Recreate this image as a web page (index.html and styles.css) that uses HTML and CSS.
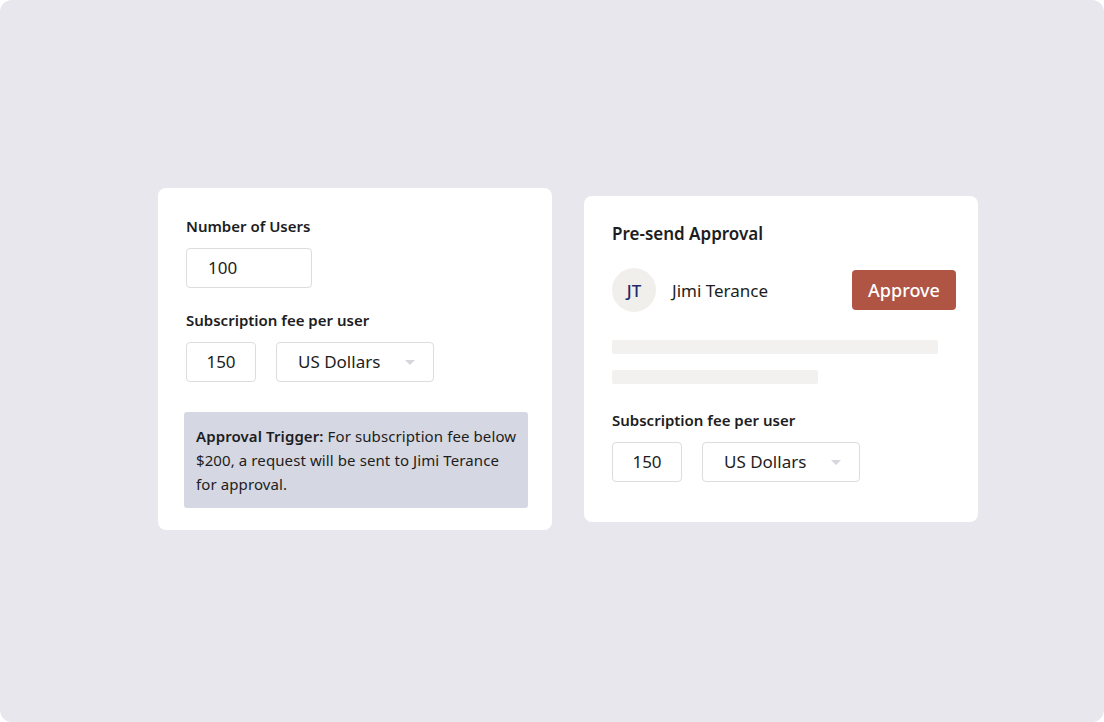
FILE: index.html
```html
<!DOCTYPE html>
<html lang="en">
<head>
    <meta charset="utf-8">
    <title>Pre-send Approval</title>
    <link rel="stylesheet" href="styles.css">
</head>

<body>

    <div class="stage">
        <div class="card card-left">
            <div class="form-item">
                <label class="label">Number of Users</label>
                <div class="field field-users">100</div>
            </div>

            <div class="form-item">
                <label class="label">Subscription fee per user</label>
                <div class="field-row">
                    <div class="field field-fee">150</div>
                    <div class="field field-select">
                        <span>US Dollars</span>
                        <span class="caret"></span>
                    </div>
                </div>
            </div>

            <div class="note">
                <b>Approval Trigger:</b> For subscription fee below $200, a request will be sent to Jimi Terance<br>for approval.
            </div>
        </div>

        <div class="card card-right">
            <h2 class="title">Pre-send Approval</h2>

            <div class="approver">
                <div class="avatar">JT</div>
                <span class="name">Jimi Terance</span>
                <button class="button">Approve</button>
            </div>

            <div class="skeleton skeleton-long"></div>
            <div class="skeleton skeleton-short"></div>

            <div class="form-item">
                <label class="label">Subscription fee per user</label>
                <div class="field-row">
                    <div class="field field-fee">150</div>
                    <div class="field field-select">
                        <span>US Dollars</span>
                        <span class="caret"></span>
                    </div>
                </div>
            </div>
        </div>
    </div>

</body>
</html>
```

FILE: styles.css
```css
body {
    font-family: 'Noto Sans', 'Open Sans', sans-serif;
    background-color: #fff;
    color: #1d1d21;
    margin: 0;
}

.stage {
    width: 1104px;
    height: 722px;
    background-color: #e8e7ee;
    border-radius: 12px;
    box-sizing: border-box;
    display: flex;
    align-items: flex-start;
    gap: 32px;
    padding: 188px 0 0 158px;
}

.card {
    width: 394px;
    background-color: #fff;
    border-radius: 8px;
    box-sizing: border-box;
}

.card-left {
    padding: 28px 24px 22px 28px;
}

.card-right {
    margin-top: 8px;
    padding: 27px 22px 40px 28px;
}

.form-item {
    margin-bottom: 22px;
}

.label {
    display: block;
    font-size: 15px;
    font-weight: 600;
    line-height: 20px;
    margin-bottom: 12px;
}

.field {
    height: 40px;
    border: 1px solid #dcdce1;
    border-radius: 4px;
    box-sizing: border-box;
    font-size: 17px;
    line-height: 38px;
    display: flex;
    align-items: center;
}

.field-users {
    width: 126px;
    padding-left: 21px;
}

.field-row {
    display: flex;
    gap: 20px;
}

.field-fee {
    width: 70px;
    justify-content: center;
}

.field-select {
    width: 158px;
    padding: 0 18px 0 21px;
    justify-content: space-between;
}

.caret {
    width: 0;
    height: 0;
    border-left: 5px solid transparent;
    border-right: 5px solid transparent;
    border-top: 5px solid #d6d6dc;
}

.note {
    margin: 30px 0 0 -2px;
    background-color: #d5d7e3;
    border-radius: 3px;
    padding: 12px 6px 12px 12px;
    font-size: 15px;
    line-height: 24px;
    letter-spacing: 0.1px;
}

.note b {
    font-weight: 600;
}

.title {
    margin: 0 0 23px;
    font-size: 17px;
    font-weight: 600;
    line-height: 22px;
}

.approver {
    display: flex;
    align-items: center;
    margin-bottom: 28px;
}

.avatar {
    width: 44px;
    height: 44px;
    border-radius: 50%;
    background-color: #f0efec;
    color: #1f2a6b;
    font-size: 17px;
    font-weight: 500;
    display: flex;
    align-items: center;
    justify-content: center;
}

.name {
    margin-left: 16px;
    font-size: 17px;
    flex: 1;
}

.button {
    background-color: #b05444;
    color: white;
    width: 104px;
    height: 40px;
    border: none;
    border-radius: 4px;
    font-family: inherit;
    font-size: 18px;
    font-weight: 500;
    cursor: pointer;
}

.skeleton {
    height: 14px;
    background-color: #f2f1ef;
    border-radius: 2px;
}

.skeleton-long {
    width: 326px;
    margin-bottom: 16px;
}

.skeleton-short {
    width: 206px;
    margin-bottom: 26px;
}

.card-right .form-item {
    margin-bottom: 0;
}
```
